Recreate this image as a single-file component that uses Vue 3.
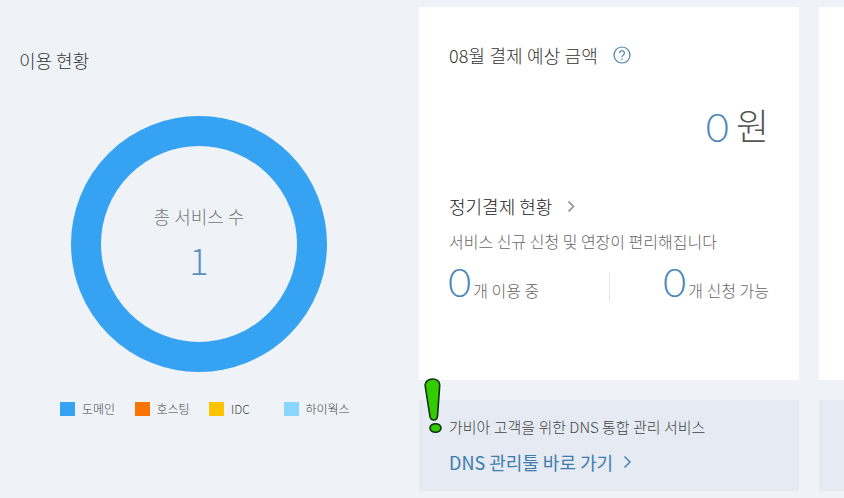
<script setup>
const legend = [
  { name: '도메인', color: '#36a2f2' },
  { name: '호스팅', color: '#f97306' },
  { name: 'IDC', color: '#ffc400' },
  { name: '하이웍스', color: '#87d7ff' },
]
</script>

<template>
  <div class="page">
    <section class="usage">
      <h2 class="usage-title">이용 현황</h2>
      <div class="donut">
        <div class="donut-label">총 서비스 수</div>
        <div class="donut-value">1</div>
      </div>
      <ul class="legend">
        <li v-for="item in legend" :key="item.name" class="legend-item">
          <span class="swatch" :style="{ background: item.color }"></span>
          <span>{{ item.name }}</span>
        </li>
      </ul>
    </section>

    <section class="middle">
      <div class="card">
        <div class="pay-title">
          <span>08월 결제 예상 금액</span>
          <svg class="help" width="18" height="18" viewBox="0 0 18 18">
            <circle cx="9" cy="9" r="8" fill="none" stroke="#4a80b0" stroke-width="1.2" />
            <path d="M6.6 7.1a2.4 2.4 0 1 1 3.7 2c-.9.6-1.3 1-1.3 2" fill="none" stroke="#4a80b0" stroke-width="1.2" />
            <circle cx="9" cy="13.2" r=".8" fill="#4a80b0" />
          </svg>
        </div>
        <div class="amount"><span class="amount-num">0</span><span class="amount-unit">원</span></div>

        <div class="regular-title">
          <span>정기결제 현황</span>
          <svg width="9" height="13" viewBox="0 0 9 13">
            <path d="M1.5 1.500l5 5-5 5" fill="none" stroke="#9a9da3" stroke-width="1.800" />
          </svg>
        </div>
        <p class="regular-desc">서비스 신규 신청 및 연장이 편리해집니다</p>
        <div class="counts">
          <div class="count count-left"><span class="count-num">0</span><span class="count-text">개 이용 중</span></div>
          <div class="count count-right"><span class="count-num">0</span><span class="count-text">개 신청 가능</span></div>
        </div>
      </div>

      <div class="banner">
        <p class="banner-text">가비아 고객을 위한 DNS 통합 관리 서비스</p>
        <a class="banner-link">
          <span>DNS 관리툴 바로 가기</span>
          <svg width="9" height="14" viewBox="0 0 9 14">
            <path d="M1.5 1.5l5.5 5.5-5.5 5.5" fill="none" stroke="#3f7cae" stroke-width="1.4" />
          </svg>
        </a>
        <svg class="alert" width="20" height="57" viewBox="0 0 20 57">
          <path d="M8.500 1c4 0 7.500 2 7.200 6.500L13.500 38c-.2 3-1.500 4-3.700 4s-3.500-1-3.900-4L1.200 8C.6 3.500 4.500 1 8.500 1z" fill="#33cc00" stroke="#10300a" stroke-width="1.600" />
          <ellipse cx="11.500" cy="50" rx="5.500" ry="4.300" fill="#33cc00" stroke="#10300a" stroke-width="1.600" />
        </svg>
      </div>
    </section>

    <section class="right">
      <div class="card-stub"></div>
      <div class="banner-stub"></div>
    </section>
  </div>
</template>

<style>
html, body { margin: 0; background: #eff3f8; overflow: hidden; }
</style>

<style scoped>
.page {
  width: 844px;
  height: 498px;
  display: flex;
  overflow: hidden;
  background: #eff3f8;
  font-family: "Noto Sans CJK KR", "Noto Sans", sans-serif;
  color: #333;
  box-sizing: border-box;
  padding-top: 7px;
}
.usage { width: 419px; flex: none; display: flex; flex-direction: column; }
.usage-title {
  margin: 41px 0 0 19px;
  font-size: 18px;
  line-height: 24px;
  font-weight: 300;
  color: #333;
}
.donut {
  margin: 44px 0 0 71px;
  width: 256px;
  height: 256px;
  box-sizing: border-box;
  border: 30px solid #36a2f2;
  border-radius: 50%;
  display: flex;
  flex-direction: column;
  align-items: center;
}
.donut-label {
  margin-top: 58px;
  font-size: 18px;
  line-height: 24px;
  font-weight: 300;
  color: #777;
}
.donut-value {
  margin-top: 7px;
  font-size: 36px;
  line-height: 48px;
  font-weight: 300;
  color: #5a93c2;
}
.legend {
  list-style: none;
  margin: 28px 0 0 60px;
  padding: 0;
  display: flex;
}
.legend-item {
  width: 74.500px;
  flex: none;
  display: flex;
  align-items: center;
  gap: 7px;
  font-size: 12px;
  line-height: 18px;
  color: #444;
  font-weight: 300;
}
.swatch { width: 15px; height: 14px; flex: none; }
.middle { width: 380px; flex: none; display: flex; flex-direction: column; gap: 20px; }
.card {
  height: 373px;
  background: #fff;
  box-sizing: border-box;
  padding: 36px 30px 0;
}
.pay-title {
  display: flex;
  align-items: center;
  gap: 15px;
  font-size: 18px;
  line-height: 24px;
  font-weight: 300;
  letter-spacing: .15px;
  color: #333;
}
.amount {
  margin-top: 31px;
  height: 53px;
  display: flex;
  justify-content: flex-end;
  align-items: baseline;
  gap: 7px;
  line-height: 53px;
}
.amount-num { font-family: Lato, sans-serif; font-size: 40px; font-weight: 300; color: #4a86b8; position: relative; top: 2px; }
.amount-unit { font-size: 36px; font-weight: 300; color: #555; }
.regular-title {
  margin-top: 43px;
  display: flex;
  align-items: center;
  gap: 15px;
  font-size: 18px;
  line-height: 24px;
  font-weight: 300;
  color: #222;
}
.regular-desc {
  margin: 12px 0 0;
  font-size: 16px;
  line-height: 22px;
  font-weight: 300;
  color: #666;
}
.counts { display: flex; margin-top: 14px; height: 44px; }
.count { flex: none; display: flex; align-items: baseline; height: 30px; }
.count-left { width: 160px; border-right: 1px solid #e4e6ea; margin-top: 6px; }
.count-right { flex: 1; justify-content: flex-end; margin-top: 6px; }
.count-num { font-family: Lato, sans-serif; font-size: 40px; line-height: 20px; font-weight: 300; color: #4a86b8; margin-left: -1px; }
.count-text { margin-left: 2px; font-size: 16px; font-weight: 300; color: #666; }
.banner {
  position: relative;
  height: 91px;
  background: #e5eaf3;
  box-sizing: border-box;
  padding: 17px 30px 0;
}
.banner-text { margin: 0; font-size: 15px; line-height: 20px; font-weight: 300; color: #444; }
.banner-link {
  margin-top: 12px;
  display: flex;
  align-items: center;
  gap: 10px;
  font-size: 18px;
  line-height: 26px;
  font-weight: 400;
  color: #3f7cae;
}
.alert { position: absolute; left: 5px; top: -22px; }
.right { margin-left: 20px; flex: 1; display: flex; flex-direction: column; gap: 20px; }
.card-stub { height: 373px; background: #fff; }
.banner-stub { height: 91px; background: #e5eaf3; }
</style>
